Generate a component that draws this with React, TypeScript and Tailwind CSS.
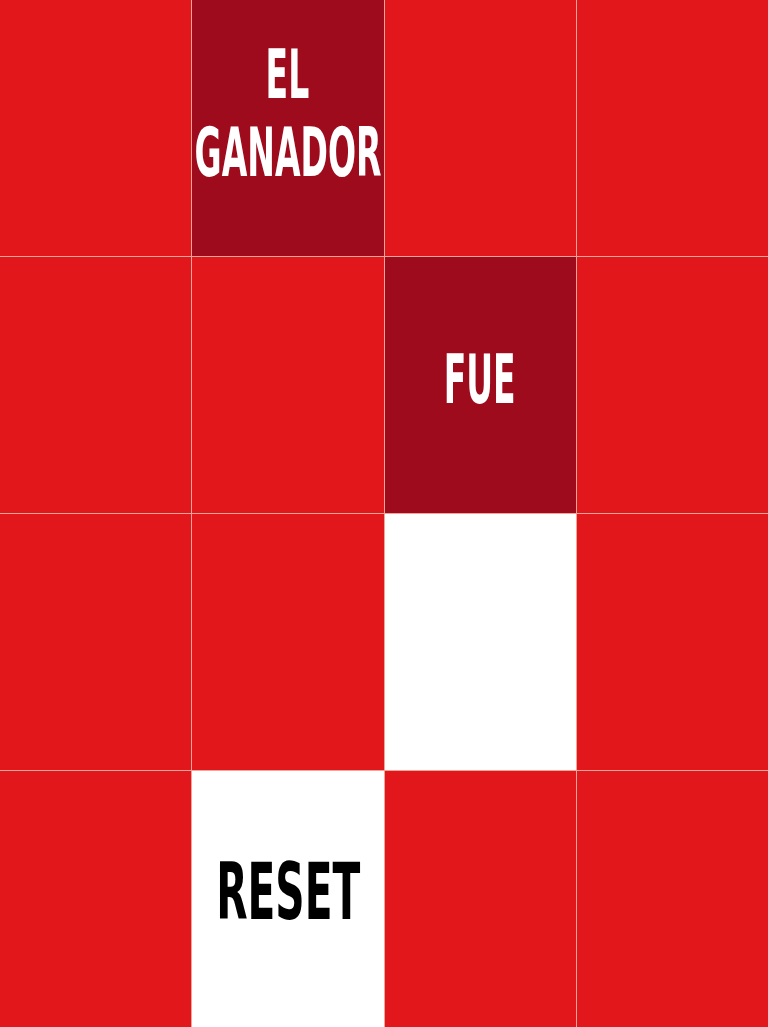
const cells: { text?: string[]; tone: "red" | "dark" | "white" }[] = [
  { tone: "red" },
  { tone: "dark", text: ["EL", "GANADOR"] },
  { tone: "red" },
  { tone: "red" },
  { tone: "red" },
  { tone: "red" },
  { tone: "dark", text: ["FUE"] },
  { tone: "red" },
  { tone: "red" },
  { tone: "red" },
  { tone: "white" },
  { tone: "red" },
  { tone: "red" },
  { tone: "white", text: ["RESET"] },
  { tone: "red" },
  { tone: "red" },
];

const toneClass = {
  red: "bg-[#e1171c]",
  dark: "bg-[#9d0b1c] text-white",
  white: "bg-white text-black",
};

function Label({ lines, big }: { lines: string[]; big: boolean }) {
  const multi = lines.length > 1;
  return (
    <div
      className={`flex flex-col items-center font-bold uppercase ${
        big ? "text-[78px] leading-[80px] pb-[14px]" : "text-[68px] leading-[78px]"
      } ${!big && (multi ? "pb-7" : "pb-[10px]")}`}
      style={{ fontFamily: '"Liberation Sans Narrow", "DejaVu Sans Condensed", "Liberation Sans", sans-serif' }}
    >
      {lines.map((l) => (
        <span
          key={l}
          className={`inline-block whitespace-nowrap ${big ? "scale-x-[0.58]" : "scale-x-[0.54]"}`}
        >
          {l}
        </span>
      ))}
    </div>
  );
}

export default function App() {
  return (
    <div className="grid w-[768px] grid-cols-4 gap-px bg-[#f2a49a]">
      {cells.map((c, i) => (
        <button
          key={i}
          className={`flex h-[256px] items-center justify-center ${toneClass[c.tone]}`}
        >
          {c.text && <Label lines={c.text} big={c.tone === "white"} />}
        </button>
      ))}
    </div>
  );
}
